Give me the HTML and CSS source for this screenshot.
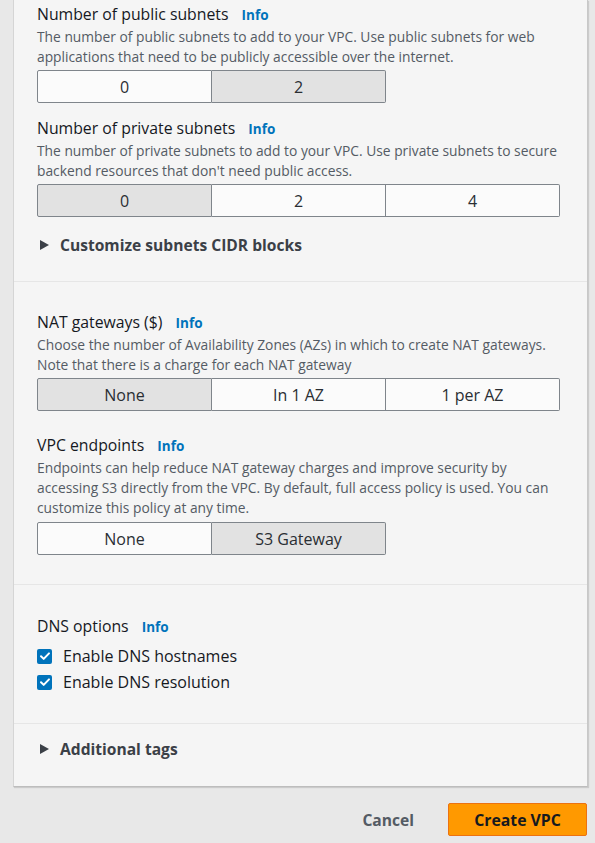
FILE: index.html
```html
<!DOCTYPE html>
<html>
<head>
<meta charset="utf-8">
<link rel="stylesheet" href="styles.css">
</head>
<body>
<div class="page">
  <div class="panel">
    <section class="section sec-subnets">
      <div class="field">
        <div class="label">Number of public subnets <a class="info">Info</a></div>
        <p class="desc">The number of public subnets to add to your VPC. Use public subnets for web applications that need to be publicly accessible over the internet.</p>
        <div class="seg seg-2">
          <button class="opt">0</button>
          <button class="opt sel">2</button>
        </div>
      </div>
      <div class="field">
        <div class="label">Number of private subnets <a class="info">Info</a></div>
        <p class="desc">The number of private subnets to add to your VPC. Use private subnets to secure backend resources that don't need public access.</p>
        <div class="seg seg-3">
          <button class="opt sel">0</button>
          <button class="opt">2</button>
          <button class="opt">4</button>
        </div>
      </div>
      <div class="expander"><span class="caret"></span>Customize subnets CIDR blocks</div>
    </section>
    <section class="section sec-nat">
      <div class="field">
        <div class="label">NAT gateways ($) <a class="info">Info</a></div>
        <p class="desc">Choose the number of Availability Zones (AZs) in which to create NAT gateways. Note that there is a charge for each NAT gateway</p>
        <div class="seg seg-3">
          <button class="opt sel">None</button>
          <button class="opt">In 1 AZ</button>
          <button class="opt">1 per AZ</button>
        </div>
      </div>
      <div class="field field-gap">
        <div class="label">VPC endpoints <a class="info">Info</a></div>
        <p class="desc desc-tall">Endpoints can help reduce NAT gateway charges and improve security by accessing S3 directly from the VPC. By default, full access policy is used. You can customize this policy at any time.</p>
        <div class="seg seg-2">
          <button class="opt">None</button>
          <button class="opt sel">S3 Gateway</button>
        </div>
      </div>
    </section>
    <section class="section sec-dns">
      <div class="label">DNS options <a class="info">Info</a></div>
      <div class="checks">
        <label class="check"><span class="box"><svg viewBox="0 0 14 14" width="14" height="14"><path d="M3 7.2l2.7 2.7L11 4.4" fill="none" stroke="#fff" stroke-width="2" stroke-linecap="round" stroke-linejoin="round"/></svg></span>Enable DNS hostnames</label>
        <label class="check"><span class="box"><svg viewBox="0 0 14 14" width="14" height="14"><path d="M3 7.2l2.7 2.7L11 4.4" fill="none" stroke="#fff" stroke-width="2" stroke-linecap="round" stroke-linejoin="round"/></svg></span>Enable DNS resolution</label>
      </div>
    </section>
    <section class="section sec-tags">
      <div class="expander"><span class="caret"></span>Additional tags</div>
    </section>
  </div>
  <div class="actions">
    <button class="btn-link">Cancel</button>
    <button class="btn-primary">Create VPC</button>
  </div>
</div>
</body>
</html>
```

FILE: styles.css
```css
* { box-sizing: border-box; }
html, body { margin: 0; padding: 0; }
body {
  background: #e8e8e8;
  font-family: "Open Sans", "Liberation Sans", sans-serif;
  color: #16191f;
  width: 595px;
  height: 843px;
  overflow: hidden;
}
.page { padding: 0 8px 0 13px; }
.panel {
  background: #f5f5f5;
  border-left: 1px solid #d5d5d5;
  border-right: 1px solid #c8c8c8;
  border-bottom: 1px solid #bdbdbd;
  box-shadow: 1px 1px 1px rgba(0,0,0,0.12);
  width: 575px;
}
.section { padding: 0 0 0 23px; border-top: 1px solid #e6e6e6; }
.sec-subnets { border-top: none; padding-top: 3px; padding-bottom: 25px; }
.sec-nat { padding-top: 29px; padding-bottom: 29px; }
.sec-dns { padding-top: 30px; padding-bottom: 30px; }
.sec-tags { padding-top: 14px; padding-bottom: 26px; }
.field + .field { margin-top: 14px; }
.field + .field-gap { margin-top: 23px; }
.label {
  font-size: 15.8px;
  line-height: 22px;
  color: #16191f;
}
.info {
  font-size: 13.5px;
  font-weight: 700;
  color: #0073bb;
  margin-left: 9px;
}
.desc {
  margin: 1px 0 4px;
  font-size: 13.8px;
  line-height: 19.5px;
  color: #545b64;
  width: 526px;
}
.desc-tall { line-height: 20px; }
.seg { display: flex; }
.seg-2 { width: 349px; }
.seg-3 { width: 523px; }
.opt {
  flex: 1;
  height: 33px;
  font-family: inherit;
  font-size: 16px;
  color: #2a2e33;
  background: #fbfbfb;
  border: 1px solid #7f858b;
  border-left: none;
  padding: 0;
}
.opt:first-child { border-left: 1px solid #7f858b; border-radius: 2px 0 0 2px; }
.opt:last-child { border-radius: 0 2px 2px 0; }
.opt.sel { background: #e2e2e2; }
.expander {
  margin-top: 17px;
  display: flex;
  align-items: center;
  font-size: 15.6px;
  font-weight: 700;
  color: #3b4047;
  line-height: 22px;
}
.caret {
  width: 0; height: 0;
  border-top: 5px solid transparent;
  border-bottom: 5px solid transparent;
  border-left: 9px solid #3b4047;
  margin: 0 11px 0 3px;
}
.sec-tags .expander { margin-top: 0; }
.checks { margin-top: 7px; display: flex; flex-direction: column; gap: 4px; }
.check {
  display: flex;
  align-items: center;
  font-size: 16px;
  line-height: 22px;
  color: #16191f;
}
.box {
  width: 15px; height: 15px;
  background: #0073bb;
  border-radius: 2px;
  margin-right: 11px;
  display: flex;
  align-items: center;
  justify-content: center;
}
.actions {
  display: flex;
  justify-content: flex-end;
  align-items: center;
  padding-top: 16px;
  gap: 34px;
}
.btn-link {
  font-family: inherit;
  font-size: 15.6px;
  font-weight: 700;
  color: #545b64;
  background: none;
  border: none;
  padding: 0;
}
.btn-primary {
  font-family: inherit;
  font-size: 15.8px;
  font-weight: 700;
  color: #16191f;
  background: #ff9900;
  border: 1px solid #ec7211;
  border-radius: 2px;
  width: 139px;
  height: 33px;
}
```
